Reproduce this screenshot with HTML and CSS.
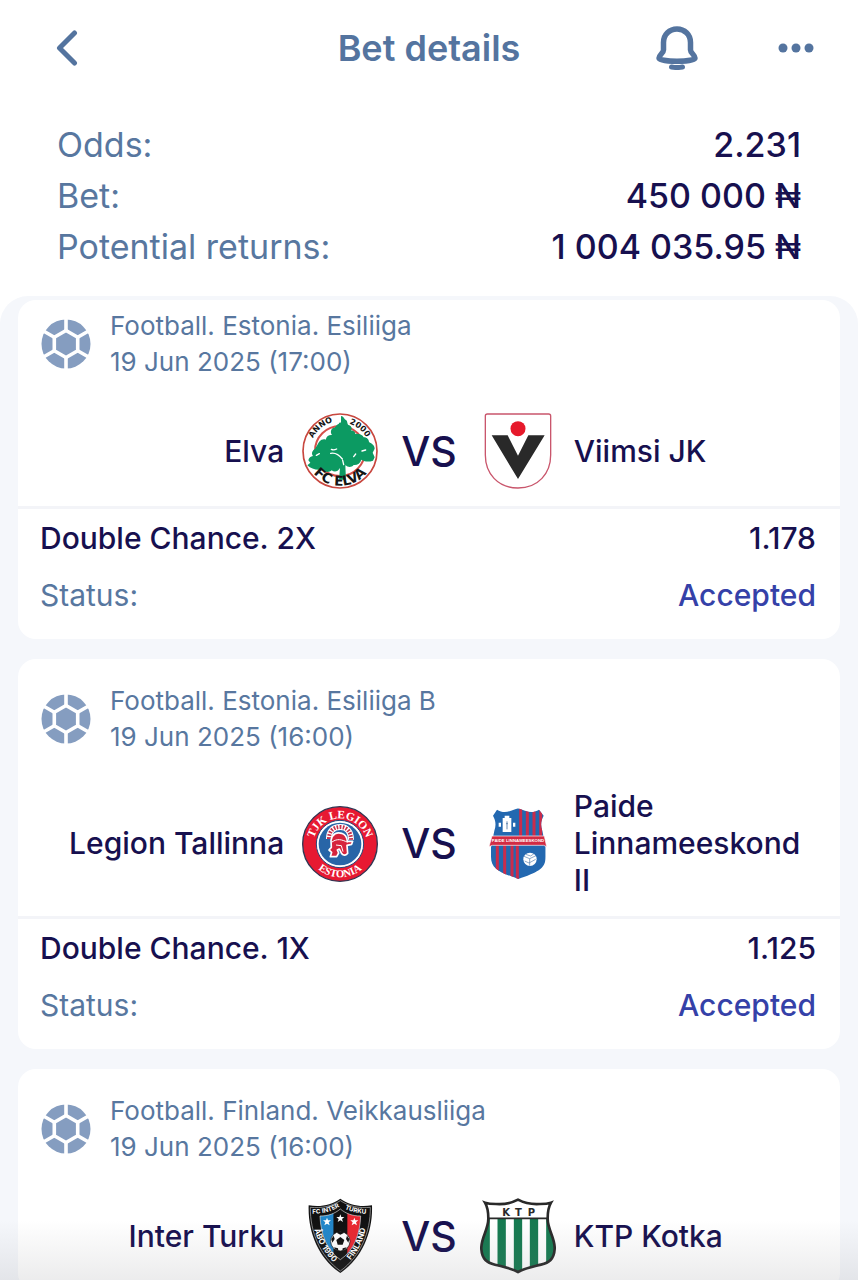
FILE: index.html
```html
<!DOCTYPE html>
<html lang="en">

<head>
  <meta charset="UTF-8">
  <meta name="viewport" content="width=device-width, initial-scale=1.0">
  <title>Bet details</title>
  <link rel="stylesheet" href="styles.css">
</head>

<body>
  <!-- shared ball icon -->
  <svg class="sprite" aria-hidden="true">
    <symbol id="ball" viewBox="0 0 50 50">
      <circle cx="25" cy="25" r="24.5" fill="#859dc0" />
      <g fill="none" stroke="#fff" stroke-width="3.6">
        <path d="M25 11.5 36.7 18.2V31.8L25 38.5 13.3 31.8V18.2Z" />
        <path d="M25 0V11M25 39V50M13.3 18.2 2 11.7M36.7 18.2 48 11.7M13.3 31.8 2 38.3M36.7 31.8 48 38.3" />
      </g>
    </symbol>
  </svg>

  <div class="app">
    <header class="topbar">
      <button class="icon-button back" aria-label="Back">
        <svg width="22" height="38" viewBox="0 0 22 38"><path d="M18.500 4 3.500 19l15 15" fill="none" stroke="#54749f" stroke-width="5" stroke-linecap="round" stroke-linejoin="round" /></svg>
      </button>
      <h1>Bet details</h1>
      <div class="actions">
        <button class="icon-button" aria-label="Notifications">
          <svg width="42" height="44" viewBox="0 0 42 44" fill="none" stroke="#54749f">
            <path d="M7.500 24V16.500C7.500 8.500 13.500 3 21 3s13.500 5.500 13.500 13.500V24c0 3 4.500 5 4.500 8 0 1.500-7 3.300-18 3.300S3 33.500 3 32c0-3 4.500-5 4.500-8Z" stroke-width="5.500" stroke-linejoin="round" />
            <path d="M15.500 41c3 .6 8 .6 11 0" stroke-width="5" stroke-linecap="round" />
          </svg>
        </button>
        <button class="icon-button" aria-label="More">
          <svg width="36" height="10" viewBox="0 0 36 10" fill="#54749f"><circle cx="5" cy="5" r="4.500" /><circle cx="18" cy="5" r="4.500" /><circle cx="31" cy="5" r="4.500" /></svg>
        </button>
      </div>
    </header>

    <dl class="summary">
      <div><dt>Odds:</dt><dd>2.231</dd></div>
      <div><dt>Bet:</dt><dd>450 000 ₦</dd></div>
      <div><dt>Potential returns:</dt><dd>1 004 035.95 ₦</dd></div>
    </dl>

    <main class="events">
      <article class="card card-first">
        <div class="league">
          <svg class="ball"><use href="#ball" /></svg>
          <p>Football. Estonia. Esiliiga<br>19 Jun 2025 (17:00)</p>
        </div>
        <div class="match">
          <div class="team home">
            <span>Elva</span>
            <svg class="logo" viewBox="0 0 228 228">
              <circle cx="114" cy="114" r="111" fill="#fff" stroke="#c8473f" stroke-width="5" />
              <circle cx="114" cy="114" r="75" fill="none" stroke="#d4504a" stroke-width="6" />
              <path d="M117 9c8 0 9 10 16 13 5 5 1 13 9 15 7 3 9 10 5 16 7-1 13 4 13 10 9-2 22 2 25 10 8-1 16 6 16 14 9 5 17 10 17 20l-6 12 6 14-5 10c-14 5-24 3-35-3-3 11-12 17-23 16-8 9-18 6-25 1l2 43h-21l3-35c-7 12-17 13-25 7-9 8-21 5-28-3-16 4-33-1-45-12l9-8-6-7c2-9 7-12 14-13-6-7-2-17 6-21l12-21c7-8 14-9 20-7 3-11 10-15 19-14-6-8-3-17 3-21 8 0 9-10 17-12 2-4 4-5 7-4Z" fill="#0c9a62" />
              <path d="M86 121c15-3 25 4 35 17M88 109c7 3 12 1 16-1M180 114l11-3M52 122l-9 5M122 142l3 13M161 123l-6 8" fill="none" stroke="#fff" stroke-width="4" stroke-linecap="round" />
              <path id="elva-top-left" d="M33 76A89 89 0 0 1 100 26" fill="none" />
              <path id="elva-top-right" d="M142 32A86 86 0 0 1 201 98" fill="none" />
              <path id="elva-bottom" d="M16 149A104 104 0 0 0 212 149" fill="none" />
              <g class="logo-wide" fill="#151515">
                <text font-size="24"><textPath href="#elva-top-left">ANNO</textPath></text>
                <text font-size="24"><textPath href="#elva-top-right">2000</textPath></text>
                <text font-size="41" text-anchor="middle"><textPath href="#elva-bottom" startOffset="50%">FC ELVA</textPath></text>
              </g>
            </svg>
          </div>
          <span class="versus">VS</span>
          <div class="team away">
            <svg class="logo" viewBox="0 0 228 228">
              <path d="M22 3H206Q212 3 212 9V126c0 55-37 99-98 99S16 181 16 126V9Q16 3 22 3Z" fill="#fff" stroke="#c9566c" stroke-width="4" />
              <path d="M35 67H83l31 61 31-61h49l-80 131Z" fill="#292929" />
              <circle cx="114" cy="47" r="22.500" fill="#e6192b" />
            </svg>
            <span>Viimsi JK</span>
          </div>
        </div>
        <dl class="result">
          <div class="market"><dt>Double Chance. 2X</dt><dd>1.178</dd></div>
          <div class="status"><dt>Status:</dt><dd>Accepted</dd></div>
        </dl>
      </article>

      <article class="card">
        <div class="league">
          <svg class="ball"><use href="#ball" /></svg>
          <p>Football. Estonia. Esiliiga B<br>19 Jun 2025 (16:00)</p>
        </div>
        <div class="match">
          <div class="team home">
            <span>Legion Tallinna</span>
            <svg class="logo" viewBox="0 0 228 228">
              <circle cx="114" cy="114" r="112" fill="#e71932" stroke="#303653" stroke-width="4" />
              <circle cx="114" cy="114" r="71" fill="#fff" stroke="#26477b" stroke-width="3" />
              <circle cx="114" cy="114" r="64" fill="#2865a7" />
              <path d="M81 99c0-25 14-36 34-36s32 14 32 38" fill="none" stroke="#fff" stroke-width="18" />
              <path d="M81 99c0-25 14-36 34-36s32 14 32 38" fill="none" stroke="#c8304b" stroke-width="12" stroke-dasharray="5 4" />
              <path d="M87 103c4-20 18-25 32-21 12 4 16 14 17 24h16l-3 9-14 3 2 24c-4 6-12 8-18 1l-7-14-6 3 4 9-6 11H85l4-13-8-7 7-8Z" fill="#d6233c" stroke="#fff" stroke-width="5" stroke-linejoin="round" />
              <path d="M90 108c16-11 28-8 47 1M102 117l16 2 5 18" fill="none" stroke="#fff" stroke-width="3" />
              <path id="legion-top" d="M33 118A81 81 0 1 1 195 118" fill="none" />
              <path id="legion-bottom" d="M18 142A100 100 0 0 0 210 142" fill="none" />
              <g class="logo-serif" fill="#fff" text-anchor="middle">
                <text font-size="34"><textPath href="#legion-top" startOffset="50%">TJK LEGION</textPath></text>
                <text font-size="32"><textPath href="#legion-bottom" startOffset="50%">ESTONIA</textPath></text>
              </g>
            </svg>
          </div>
          <span class="versus">VS</span>
          <div class="team away">
            <svg class="logo" viewBox="0 0 228 228">
              <defs>
                <clipPath id="paide-shield"><path d="M51 11c14 9 28 9 42 3l21-7 21 7c14 6 28 6 42-3l14 18c-8 14-10 29-4 45l10 50v28c0 38-28 47-82 67-54-20-82-29-82-67v-28L43 74c6-16 4-31-4-45Z" /></clipPath>
              </defs>
              <g clip-path="url(#paide-shield)">
                <path d="M0 0H228V228H0Z" fill="#2368b0" />
                <path d="M122 0v100M142 0v100M162 0v100M182 0v100M52 114v110M74 114v110M96 114v110M112 114v110" stroke="#ca2c4b" stroke-width="9" />
              </g>
              <path d="M68 36h26v42H68Z M56 50h7v12h-7Z M99 50h7v12h-7Z M74 29h14v7H74Z" fill="#fff" />
              <path d="M81 46v24M78 53h6" stroke="#688ab0" stroke-width="3" />
              <path d="M36 90H193l7 32-9-4H37l-10 4Z" fill="#d22b43" stroke="#fff" stroke-width="2" />
              <text class="logo-narrow" x="114" y="109" font-size="13" text-anchor="middle" fill="#fff">PAIDE LINNAMEESKOND</text>
              <circle cx="150" cy="160" r="20" fill="#fff" />
              <path d="m132 151 17 7 19-9M149 158v21M137 145l15 5 10-7M134 165l13 6 20-11" fill="none" stroke="#527cac" stroke-width="2" />
            </svg>
            <span>Paide Linnameeskond II</span>
          </div>
        </div>
        <dl class="result">
          <div class="market"><dt>Double Chance. 1X</dt><dd>1.125</dd></div>
          <div class="status"><dt>Status:</dt><dd>Accepted</dd></div>
        </dl>
      </article>

      <article class="card">
        <div class="league">
          <svg class="ball"><use href="#ball" /></svg>
          <p>Football. Finland. Veikkausliiga<br>19 Jun 2025 (16:00)</p>
        </div>
        <div class="match">
          <div class="team home">
            <span>Inter Turku</span>
            <svg class="logo" viewBox="0 0 228 228">
              <defs>
                <clipPath id="inter-shield"><path d="M54 54c25 0 44-7 61-21 17 14 36 21 61 21-2 55-20 104-61 131C74 158 56 109 54 54Z" /></clipPath>
              </defs>
              <path d="M115 2c28 20 58 25 95 20 3 79-29 158-95 203C49 180 17 101 20 22c37 5 67 0 95-20Z" fill="#111" />
              <path d="M115 8c28 18 56 23 90 20 1 73-29 147-90 191C54 175 24 101 25 28c34 3 62-2 90-20Z" fill="none" stroke="#bbb" stroke-width="2" />
              <g clip-path="url(#inter-shield)">
                <path d="M50 30H95V190H50Z" fill="#2186c9" />
                <path d="M95 30h41v160H95Z" fill="#111" />
                <path d="M136 30h45v160h-45Z" fill="#e92731" />
              </g>
              <path d="M54 54c25 0 44-7 61-21 17 14 36 21 61 21-2 55-20 104-61 131C74 158 56 109 54 54Z" fill="none" stroke="#ddd" stroke-width="2" />
              <path id="star" d="m115 49 3 8h9l-7 6 3 9-8-5-8 5 3-9-7-6h9Z" fill="#fff" />
              <use href="#star" x="-40" y="10" />
              <use href="#star" x="42" y="10" />
              <circle cx="115" cy="130" r="29" fill="#fff" stroke="#111" stroke-width="2" />
              <path d="m115 117 12 9-5 14h-15l-4-14ZM104 104l11 6 12-6-6-3h-11ZM88 123l7-10 3 10-7 11ZM142 123l-7-10-3 10 7 11ZM96 148l12 3 1 7-9-4ZM134 148l-12 3-1 7 9-4Z" fill="#111" />
              <path id="inter-top-left" d="M29 47Q75 49 115 25" fill="none" />
              <path id="inter-top-right" d="M118 28Q155 48 204 47" fill="none" />
              <path id="inter-left" d="M35 88Q50 148 99 198" fill="none" />
              <path id="inter-right" d="M140 192Q180 150 193 84" fill="none" />
              <g class="logo-text" fill="#fff" text-anchor="middle">
                <text font-size="19"><textPath href="#inter-top-left" startOffset="50%">FC INTER</textPath></text>
                <text font-size="19"><textPath href="#inter-top-right" startOffset="50%">TURKU</textPath></text>
                <text font-size="24"><textPath href="#inter-left" startOffset="50%">ÅBO 1990</textPath></text>
                <text font-size="24"><textPath href="#inter-right" startOffset="50%">FINLAND</textPath></text>
              </g>
            </svg>
          </div>
          <span class="versus">VS</span>
          <div class="team away">
            <svg class="logo" viewBox="0 0 228 228">
              <defs>
                <clipPath id="ktp-shield"><path id="ktp-outline" d="M114 5c21 11 39 15 66 13 15 0 24-1 33-4-7 12-10 31-10 47-1 33 23 59 21 92-2 31-17 41-41 47-31 8-49 11-69 22-20-11-38-14-69-22-24-6-39-16-41-47-2-33 22-59 21-92 0-16-3-35-10-47 9 3 18 4 33 4 27 2 45-2 66-13Z" /></clipPath>
              </defs>
              <g clip-path="url(#ktp-shield)">
                <path d="M0 0h228v228H0Z" fill="#fff" />
                <path d="M17 61v165M65 61v165M114 61v165M162 61v165M211 61v165" stroke="#157a50" stroke-width="25" />
                <path d="M26 61h176" stroke="#292929" stroke-width="5" />
              </g>
              <use href="#ktp-outline" fill="none" stroke="#292929" stroke-width="8" />
              <g class="logo-wide" fill="#292929" font-size="30" text-anchor="middle"><text x="78" y="53">K</text><text x="115" y="53">T</text><text x="154" y="53">P</text></g>
            </svg>
            <span>KTP Kotka</span>
          </div>
        </div>
      </article>
    </main>
  </div>
</body>

</html>
```

FILE: styles.css
```css
* {
  box-sizing: border-box;
}

body {
  margin: 0;
  background-color: #fff;
  color: #17104f;
  font-family: Inter, 'Liberation Sans', sans-serif;
}

h1, p, dl, dd {
  margin: 0;
}

.sprite {
  position: absolute;
  width: 0;
  height: 0;
}

.app {
  position: relative;
  display: flex;
  flex-direction: column;
  height: 100vh;
  overflow: hidden;
}

/* fade along the bottom edge of the screen */
.app::after {
  content: '';
  position: absolute;
  left: 0;
  right: 0;
  bottom: 0;
  height: 60px;
  background: linear-gradient(rgba(120, 120, 125, 0), rgba(120, 120, 125, 0.14));
  pointer-events: none;
}

.topbar {
  display: grid;
  grid-template-columns: 1fr auto 1fr;
  align-items: center;
  height: 96px;
  padding: 0 44px;
  flex-shrink: 0;
}

.topbar h1 {
  color: #54749f;
  font-size: 36px;
  font-weight: 600;
  line-height: 44px;
}

.icon-button {
  display: flex;
  padding: 0;
  border: none;
  background: none;
  cursor: pointer;
}

.back {
  justify-self: start;
  padding-left: 12px;
}

.actions {
  display: flex;
  justify-content: flex-end;
  align-items: center;
  gap: 80px;
}

.summary {
  padding: 23px 57px 24px;
  font-size: 34px;
  line-height: 51px;
  flex-shrink: 0;
}

.summary div,
.result div {
  display: flex;
  justify-content: space-between;
}

.summary dt,
.status dt {
  color: #58779f;
}

.summary dd {
  font-weight: 500;
}

.events {
  display: flex;
  flex-direction: column;
  gap: 20px;
  flex: 1;
  min-height: 0;
  padding: 4px 18px 0;
  overflow: hidden;
  background-color: #f5f7fb;
  border-radius: 28px 28px 0 0;
}

.card {
  flex-shrink: 0;
  padding-top: 24px;
  background-color: #fff;
  border-radius: 18px;
}

.card-first {
  padding-top: 8px;
}

.league {
  display: flex;
  align-items: center;
  gap: 19px;
  padding: 0 23px;
  color: #58779f;
  font-size: 26px;
  line-height: 36px;
}

.ball {
  width: 50px;
  height: 50px;
}

.match {
  display: grid;
  grid-template-columns: 1fr auto 1fr;
  align-items: center;
  gap: 23px;
  padding: 33px 24px 17px;
  font-size: 30px;
  font-weight: 500;
  line-height: 37px;
}

.team {
  display: flex;
  align-items: center;
  gap: 18px;
}

.home {
  justify-content: flex-end;
  text-align: right;
}

.logo {
  width: 76px;
  height: 76px;
  flex-shrink: 0;
}

.versus {
  font-size: 41px;
}

.result {
  padding: 1px 24px 15px 22px;
  border-top: 3px solid #f3f4f8;
  font-size: 30px;
  line-height: 57px;
}

.market {
  font-weight: 500;
}

.status dd {
  color: #3541a8;
  font-weight: 500;
}

.logo-text {
  font-family: Inter, sans-serif;
  font-weight: 700;
}

.logo-wide {
  font-family: 'DejaVu Sans', sans-serif;
  font-weight: 700;
}

.logo-serif {
  font-family: 'Liberation Serif', serif;
  font-weight: 700;
}

.logo-narrow {
  font-family: 'Liberation Sans', sans-serif;
  font-weight: 700;
}
```
